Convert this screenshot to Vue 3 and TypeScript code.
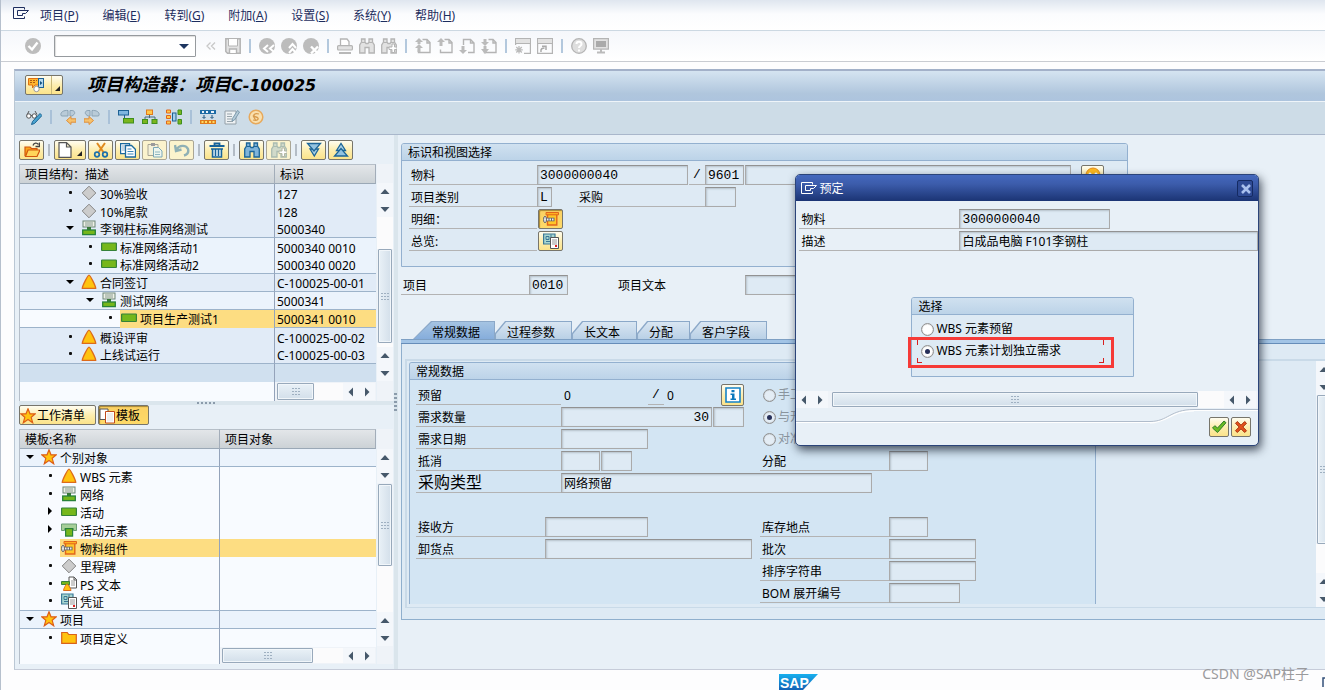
<script setup lang="ts">
import { ref } from 'vue'

interface TreeRow {
  level: number
  mark: 'dot' | 'open' | 'closed'
  icon: string
  text: string
  id: string
  line?: boolean
  selected?: boolean
}

const menus = [
  ['项目', 'P'], ['编辑', 'E'], ['转到', 'G'], ['附加', 'A'],
  ['设置', 'S'], ['系统', 'Y'], ['帮助', 'H'],
]

const G = '#b4b4b4'
const L = '#e2e2e2'
const binoculars = (s: string, f: string) =>
  `<path d="M2.500 1h3.500v3l1 1.500h2L10 4V1h3.500v3L15.300 7v8H10v-5.500H6V15H.700V7l1.800-3z" fill="${f}" stroke="${s}" stroke-width="1.300"/><path d="M3 4.500h3M10 4.500h3" stroke="${s}"/>`
const page = `<path d="M7.500 1.500h4.500l3 3v10H3.500v-3M12 1.500v3.500h3" fill="none" stroke="${G}" stroke-width="1.400"/>`
const disc = `<circle cx="8" cy="8" r="8" fill="#bcbcbc"/>`

const icons: Record<string, string> = {
  exit: `<path d="M11.500 4.500v-2h-11v11h11v-2" fill="none" stroke="currentColor"/><path d="M4.500 5.500h11l-3 3h-3v2h-5z" fill="none" stroke="currentColor"/>`,
  check: `<circle cx="8" cy="8" r="8" fill="#bdbdbd"/><path d="M3.500 8l3.500 3.500 5.500-7" fill="none" stroke="#fff" stroke-width="2.400"/>`,
  chev: `<path d="M7.500 4.500L4 8l3.500 3.500M12 4.500L8.500 8l3.500 3.500" fill="none" stroke="#c8c8c8" stroke-width="1.300"/>`,
  save: `<path d="M.8.8h14.400v14.400H2.500L.8 13.500z" fill="${L}" stroke="${G}" stroke-width="1.500"/><path d="M3.500 1v7h9V1" fill="#fff" stroke="${G}"/><path d="M4.500 15v-4h7v4" fill="#fff" stroke="${G}" stroke-width="1.400"/>`,
  back: disc + `<path d="M9 7L5 10.500 9 14M15 7l-4 3.500 4 3.500" fill="none" stroke="#fff" stroke-width="2"/>`,
  up: disc + `<path d="M8 10l3.500-4L15 10M8 15l3.500-4 3.500 4" fill="none" stroke="#fff" stroke-width="2"/>`,
  cancel: disc + `<path d="M8 8.500l7 7M15 8.500l-7 7" stroke="#fff" stroke-width="2.400"/>`,
  print: `<path d="M3.500 8V1h6.500l2 2.500V8" fill="#fff" stroke="${G}" stroke-width="1.300"/><rect x=".6" y="7.600" width="14.800" height="4.400" rx="1" fill="${L}" stroke="${G}" stroke-width="1.200"/><rect x="2" y="14" width="12" height="2" fill="#b8b8b8"/>`,
  find: binoculars(G, L),
  findNext: binoculars(G, L) + `<path d="M8 9h3V6h2.500v3H16v2.500h-2.500v3H11v-3H8z" fill="#fff" stroke="${G}"/>`,
  pgFirst: page + `<path d="M4 0l4 4H5.500v2H2.500V4H0zM4 6l4 4H5.500v4H2.500v-4H0z" fill="#bbb"/>`,
  pgUp: page + `<path d="M4 0l4 4H5.500v4H2.500V4H0z" fill="#bbb"/>`,
  pgDown: `<path d="M4.500 7V1.500h7l3.500 3.500v9.500H9M11.500 1.500V5H15" fill="none" stroke="${G}" stroke-width="1.400"/><path d="M2.500 8h3v4H8l-4 4-4-4h2.500z" fill="#bbb"/>`,
  pgLast: page + `<path d="M2.500 1h3v3H8L4 8 0 4h2.500zM2.500 8h3v3H8l-4 5-4-5h2.500z" fill="#bbb"/>`,
  session: `<path d="M.6 7V.6h14.800v14.800H9" fill="none" stroke="${G}" stroke-width="1.200"/><path d="M1 1h14v4H1z" fill="${L}"/><path d="M.5 5.500h15" stroke="${G}"/><path d="M4 8v7.500M.3 11.800h7.500M1.300 9l5.500 5.500M6.800 9l-5.500 5.500" stroke="#bbb" stroke-width="1.300"/>`,
  shortcut: `<path d="M.6.6h14.800v14.800H.6z" fill="none" stroke="${G}" stroke-width="1.200"/><path d="M1 1h14v4H1z" fill="${L}"/><path d="M.5 5.500h15" stroke="${G}"/><path d="M4 14c-.5-3 1-4 3.500-4M5 8.300h4V12" fill="none" stroke="#aaa" stroke-width="1.500"/>`,
  help: `<circle cx="8" cy="8" r="7.300" fill="#dedede" stroke="${G}" stroke-width="1.300"/><path d="M5.500 6c0-3 5-3 5 0 0 2-2.500 2-2.500 4M8 11.500v2" fill="none" stroke="#fff" stroke-width="2"/>`,
  monitor: `<rect x=".6" y=".6" width="14.800" height="10.500" fill="${L}" stroke="${G}" stroke-width="1.200"/><rect x="3" y="3" width="10" height="6" fill="#aaa"/><path d="M7 11h2v2.500h3v2H4v-2h3z" fill="#bbb"/>`,
  edit: `<path d="M3 2L1 6M9 2l2 3.500" fill="none" stroke="#555"/><circle cx="2.800" cy="7" r="2.200" fill="#fff" stroke="#555"/><circle cx="8.300" cy="7" r="2.200" fill="#fff" stroke="#555"/><path d="M5 6.500h1" stroke="#555"/><path d="M14 4.500l2 2-7.500 8-3 1 1-3z" fill="#4aa3cf" stroke="#1c6593"/>`,
  moveL: `<path d="M1 6.500C0 3 4 1 8 1.500v5.500H2zM10 1.500h2c2.500 0 3.500 2.500 2 4L12 7h-2z" fill="#b9cbd8" stroke="#8ba3b5"/><path d="M6.500 11.500l4.500-4v2.300h5v3.400h-5v2.300z" fill="#f6c26c" stroke="#dd8f3e"/>`,
  moveR: `<path d="M15 6.500C16 3 12 1 8 1.500v5.500h6zM6 1.500H4C1.500 1.500.500 4 2 5.500L4 7h2z" fill="#b9cbd8" stroke="#8ba3b5"/><path d="M9.500 11.500L5 7.500v2.300H0v3.400h5v2.300z" fill="#f6c26c" stroke="#dd8f3e"/>`,
  gantt: `<rect x=".5" y="1.500" width="10" height="4.500" fill="#7fb6df" stroke="#1d6194"/><path d="M6.500 6v5" stroke="#1d6194"/><rect x="5.500" y="9.500" width="10" height="4.500" fill="#7ab51d" stroke="#3f8f1c"/>`,
  hier: `<path d="M7.500 5v4M3 11V8h10v3" fill="none" stroke="#4a6c7c"/><rect x="4.500" y="1" width="6" height="4.500" fill="#ffc84a" stroke="#e07b1c"/><rect x=".5" y="10.500" width="5" height="4" fill="#7ab51d" stroke="#3f8f1c"/><rect x="10" y="10.500" width="5" height="4" fill="#7ab51d" stroke="#3f8f1c"/>`,
  net: `<g fill="#ffc84a" stroke="#e0661c"><path d="M.5 1h4v3h-4zM.5 6.500h4v3h-4zM.5 12h4v3h-4z"/></g><rect x="6.500" y="4" width="3.500" height="8" fill="#a6d0ec" stroke="#1d6194"/><path d="M12 1h3.500v4.500H12zM12 10.500h3.500V15H12z" fill="#7ab51d" stroke="#3f8f1c"/>`,
  plan: `<path d="M0 1h16v4H0z" fill="#1d6ba5"/><path d="M2 2h2v2H2zM6 2h2v2H6zM11 2h3v2h-3z" fill="#e9f3fb"/><path d="M4 6v3M2.500 8L4 9.500 5.500 8M12 6v3M10.500 8L12 9.500 13.500 8" fill="none" stroke="#1d5580"/><path d="M0 11h16v4H0z" fill="#e07b1c"/><path d="M1.500 12h2v2h-2zM5 12h2v2H5zM9 12h2v2H9zM12.500 12h2v2h-2z" fill="#ffdc62"/>`,
  note: `<path d="M1 2h11v13H1z" fill="#eef2f4" stroke="#94a0a8"/><path d="M3 5h5M3 7.500h5M3 10h5M3 12.500h6" stroke="#98a4ab"/><path d="M13.500 1.500l2 1.500-5 8-2.500 1 .5-2.500z" fill="#b5cbd8" stroke="#7d9bae"/>`,
  coin: `<circle cx="8" cy="8" r="6.800" fill="#fae0ae" stroke="#e7a95c" stroke-width="1.500"/><path d="M11 5C6 3.500 4 7 8 8s2 4.500-3 3M5 6.500l2.500 4.500" fill="none" stroke="#d89a4c" stroke-width="1.300"/>`,
  process: `<path d="M.5 1.500h11v6.500H7l-2.500 3V8h-4z" fill="#ffb52e" stroke="#dd6f12"/><path d="M2 3.500h7M2 5.500h6" stroke="#b05a10" stroke-dasharray="2 1"/><rect x="10.500" y="1.500" width="5" height="9" fill="#b5d9ef" stroke="#1d6194"/><path d="M12 4l2.500 2L12 8z" fill="#12507e"/><circle cx="8.500" cy="12" r="2.700" fill="#fff" stroke="#999"/>`,
  open: `<path d="M1 14V5h5l1.500 1.500H13V8" fill="#f9a51a" stroke="#d2560d" stroke-width="1.200"/><path d="M1.500 14.500L4 8h12l-3 6.500z" fill="#ffd55a" stroke="#d2560d" stroke-width="1.200"/><path d="M9 3.500c1-3 4-3 5.500-1M15.500.5v4h-4" fill="none" stroke="#444" stroke-width="1.300"/>`,
  create: `<path d="M3 .6h7.500L15 5v10.400H3zM10.500.6V5H15" fill="#fff" stroke="#555" stroke-width="1.200"/>`,
  cut: `<path d="M4 1l7 10M12 1L5 11" stroke="#e08a1e" stroke-width="2"/><circle cx="4" cy="12.500" r="2.300" fill="none" stroke="#1c70ab" stroke-width="1.700"/><circle cx="12" cy="12.500" r="2.300" fill="none" stroke="#1c70ab" stroke-width="1.700"/>`,
  copy: `<path d="M.6 1.600h9v10h-9z" fill="#fff" stroke="#1c6a9e" stroke-width="1.200"/><path d="M2 4h3M2 6h3M2 8h3" stroke="#8aaec6"/><path d="M5.500 3.500h6l4 4v7.500h-10z" fill="#fff" stroke="#1c6a9e" stroke-width="1.300"/><path d="M7.500 7h4M7.500 9.500h6M7.500 12h6" stroke="#3b87b8"/>`,
  paste: `<path d="M1 2.500h10v11H1z" fill="#f5f1d8" stroke="#a8a595"/><path d="M4 1h4v3H4z" fill="#9b9b9b"/><path d="M6.500 5.500h5l3.500 3.500v6H6.500z" fill="#eef6ee" stroke="#7ca9b8"/><path d="M8 10h5M8 12.500h5" stroke="#8fb6c0"/>`,
  undo: `<path d="M1 3l1 6 5.500-1.500M2.500 7.500C5 3 12 2.500 14 7c.8 3-.8 5.500-4 6.500" fill="none" stroke="#8fb0b5" stroke-width="2.400"/>`,
  trash: `<path d="M.5 4h15M5.500 4V1.500h5V4" fill="none" stroke="#17639b" stroke-width="1.800"/><path d="M2 7h12M3.500 7h9v8h-9z" fill="#cfe4f0" stroke="#17639b" stroke-width="1.500"/><path d="M6.500 7v7M9.500 7v7" stroke="#17639b" stroke-width="1.300"/>`,
  findB: binoculars('#1c6598', '#7fb4da'),
  findBN: `<g opacity=".5">${binoculars('#5b8696', '#a9c2c9')}</g><path d="M8 9h3V6h2.500v3H16v2.500h-2.500v3H11v-3H8z" fill="#fff" stroke="#b5b9a4"/>`,
  down: `<path d="M4 7h8.500L8.300 14z" fill="#a8cfe4" stroke="#1c6598" stroke-width="1.300"/><path d="M1.500 1.500h13L8 9z" fill="#93c3e0" stroke="#1c6598" stroke-width="1.300"/>`,
  upp: `<path d="M3.500 8.500L8 1.500l4.500 7z" fill="#a8cfe4" stroke="#1c6598" stroke-width="1.300"/><path d="M1.500 14h13L8 6.500z" fill="#93c3e0" stroke="#1c6598" stroke-width="1.300"/>`,
  milestone: `<path d="M8 1.200L14.800 8 8 14.800 1.200 8z" fill="#ccc" stroke="#858585"/>`,
  network: `<rect x="2" y="1" width="12" height="6" fill="#eef1e6" stroke="#6d8577"/><path d="M4 3h8M4 5h8" stroke="#8a9c92"/><path d="M8 7v3.500" stroke="#39793a" stroke-width="4"/><rect x="1.700" y="10" width="12.600" height="4.600" fill="#76b71b" stroke="#28823a" stroke-width="1.300"/>`,
  activity: `<rect x=".6" y="4" width="14.800" height="7.500" rx=".5" fill="#76b71b" stroke="#35823a" stroke-width="1.200"/>`,
  element: `<path d="M.5 2h15v6.500h-3V6.500h-9v2h-3z" fill="#a5cf98" stroke="#6b9d75"/><rect x="4.600" y="6.600" width="7" height="7.500" fill="#76b71b" stroke="#28823a" stroke-width="1.200"/>`,
  wbs: `<path d="M8 1.200c1.200 0 6.700 10.800 6.700 13.200H1.300C1.300 12 6.800 1.200 8 1.200z" fill="#ffc30f" stroke="#dd6a1a" stroke-width="1.300"/>`,
  star: `<path d="M8 .8l2 5h5.300l-4.100 3.500 1.500 5.500L8 11.600l-4.700 3.200 1.500-5.500L.7 5.800H6z" fill="#ffc30f" stroke="#de5f17" stroke-width="1.200"/>`,
  component: `<path d="M4.500 3v11h9.300V3" fill="#ffc627" stroke="#e1661c" stroke-width="1.400"/><path d="M3 1.500h12.500v2.300H3z" fill="#ffb020" stroke="#e1661c"/><ellipse cx="2" cy="8.500" rx="1.500" ry="3.200" fill="#e5e5e5" stroke="#666"/><path d="M3.500 8.500h8" stroke="#666" stroke-width="3.600"/><path d="M4 8.500h7" stroke="#eee" stroke-width="1.800" stroke-dasharray="1.500 1"/>`,
  pstext: `<path d="M8 1h5l2.500 2.500V12H8zM13 1v3h3" fill="#fff" stroke="#555"/><path d="M10 5h4M10 7h4M10 9h4" stroke="#999"/><path d="M.5 5.500h8v3h-8z" fill="#76b71b" stroke="#39823a"/><path d="M6 8c1 0 4 5 4 6.500H2.500C2.500 13 5 8 6 8z" fill="#ffc30f" stroke="#dd6a1a"/>`,
  doc: `<path d="M.6 1h11.400v10H.6z" fill="#a9d6d0" stroke="#3b7897" stroke-width="1.200"/><path d="M3 3.500h3v3H3zM8 1.500V6h3M3 8.500h4" fill="none" stroke="#3b7897"/><path d="M7.500 4.500h8v11h-8z" fill="#fff" stroke="#555"/><path d="M9 7h5M9 9h5M9 11h5" stroke="#999"/><path d="M12 12h2v2h-2z" fill="#e02020"/>`,
  folder: `<path d="M.7 13.300V2.500h5.500l1.500 2h7.600v8.800z" fill="#ffc30f" stroke="#d9621b" stroke-width="1.200"/>`,
  template: `<path d="M1 1h8v10.500H1z" fill="#fff" stroke="#555"/><path d="M6.500 3.500h9v11.500h-9z" fill="#fff" stroke="#c04a1a"/><path d="M8 5h6v8.500H8z" fill="#eee"/>`,
  info: `<path d="M1 1h14v14H1z" fill="#fff" stroke="#1583c6" stroke-width="1.600"/><path d="M6.500 3h3v2.200h-3zM5.500 6.500h4v5H11V13H5.500v-1.500H7V8H5.500z" fill="#0a78bd"/>`,
  people: `<circle cx="8" cy="8" r="7" fill="#ffb91e" stroke="#e38b1d"/><circle cx="5" cy="7" r="1.500" fill="#fff"/><circle cx="11" cy="7" r="1.500" fill="#fff"/>`,
  ok: `<path d="M1.500 9l2.300-2.300 2.700 2.300L13 2l2 1.700L6.500 13.500z" fill="#6cbb23" stroke="#2d7e2a"/>`,
  no: `<path d="M4.300 2.500L8 6.200l3.700-3.700L13.500 4.300 9.800 8l3.700 3.700-1.800 1.800L8 9.800l-3.700 3.700-1.800-1.800L6.200 8 2.500 4.300z" fill="#e4521a" stroke="#a6310e"/>`,
  cross: `<path d="M4 4l8 8M12 4l-8 8" stroke="#a9c0ee" stroke-width="2.600"/>`,
  aUp: `<path d="M8 5L12.500 10h-9z" fill="#46586a"/>`,
  aDown: `<path d="M8 11L3.500 6h9z" fill="#46586a"/>`,
  aLeft: `<path d="M5.500 8L10 3.500v9z" fill="#46586a"/>`,
  aRight: `<path d="M10.500 8L6 3.500v9z" fill="#46586a"/>`,
  corner: `<path d="M2 13V4h9" fill="none" stroke="#33507a" stroke-width="1.500"/><path d="M4.500 13V7.500h5" fill="none" stroke="#33507a"/>`,
}

const sysBar = ['chev', 'save', '|', 'back', 'up', 'cancel', '|', 'print', 'find', 'findNext', '|', 'pgFirst', 'pgUp', 'pgDown', 'pgLast', '|', 'session', 'shortcut', '|', 'help', 'monitor']
const appBar = ['edit', '|', 'moveL', 'moveR', '|', 'gantt', 'hier', 'net', '|', 'plan', 'note', 'coin']
const treeBar = ['open', '|', 'create', 'cut', 'copy', 'paste', 'undo', '|', 'trash', '|', 'findB', 'findBN', '|', 'down', 'upp']

const structure: TreeRow[] = [
  { level: 2, mark: 'dot', icon: 'milestone', text: '30%验收', id: '127' },
  { level: 2, mark: 'dot', icon: 'milestone', text: '10%尾款', id: '128' },
  { level: 2, mark: 'open', icon: 'network', text: '李钢柱标准网络测试', id: '5000340', line: true },
  { level: 3, mark: 'dot', icon: 'activity', text: '标准网络活动1', id: '5000340 0010' },
  { level: 3, mark: 'dot', icon: 'activity', text: '标准网络活动2', id: '5000340 0020', line: true },
  { level: 2, mark: 'open', icon: 'wbs', text: '合同签订', id: 'C-100025-00-01', line: true },
  { level: 3, mark: 'open', icon: 'network', text: '测试网络', id: '5000341', line: true },
  { level: 4, mark: 'dot', icon: 'activity', text: '项目生产测试1', id: '5000341 0010', line: true, selected: true },
  { level: 2, mark: 'dot', icon: 'wbs', text: '概设评审', id: 'C-100025-00-02' },
  { level: 2, mark: 'dot', icon: 'wbs', text: '上线试运行', id: 'C-100025-00-03', line: true },
]

const templates: TreeRow[] = [
  { level: 0, mark: 'open', icon: 'star', text: '个别对象', id: '', line: true },
  { level: 1, mark: 'dot', icon: 'wbs', text: 'WBS 元素', id: '' },
  { level: 1, mark: 'dot', icon: 'network', text: '网络', id: '' },
  { level: 1, mark: 'closed', icon: 'activity', text: '活动', id: '' },
  { level: 1, mark: 'closed', icon: 'element', text: '活动元素', id: '' },
  { level: 1, mark: 'dot', icon: 'component', text: '物料组件', id: '', selected: true },
  { level: 1, mark: 'dot', icon: 'milestone', text: '里程碑', id: '' },
  { level: 1, mark: 'dot', icon: 'pstext', text: 'PS 文本', id: '' },
  { level: 1, mark: 'dot', icon: 'doc', text: '凭证', id: '', line: true },
  { level: 0, mark: 'open', icon: 'star', text: '项目', id: '', line: true },
  { level: 1, mark: 'dot', icon: 'folder', text: '项目定义', id: '' },
]

const trees = [
  { key: 'structure', heads: ['项目结构：描述', '标识'], rows: structure },
  { key: 'template', heads: ['模板:名称', '项目对象'], rows: templates },
]

const tabs = ['常规数据', '过程参数', '长文本', '分配', '客户字段']
const activeTab = ref('常规数据')
const choice = ref('indep')
const mode = ref('b')
</script>

<template>
  <div class="page">
    <nav class="menubar">
      <svg class="ic exit" viewBox="0 0 16 16" v-html="icons.exit" />
      <a v-for="m in menus" :key="m[1]" href="#">{{ m[0] }}(<u>{{ m[1] }}</u>)</a>
    </nav>

    <div class="sysbar">
      <button class="flat" aria-label="确认"><svg class="ic" viewBox="0 0 16 16" v-html="icons.check" /></button>
      <div class="combo">
        <input aria-label="命令" />
        <span class="combo-arrow"></span>
      </div>
      <template v-for="(n, i) in sysBar" :key="i">
        <span v-if="n === '|'" class="sep"></span>
        <button v-else class="flat" :aria-label="n"><svg class="ic" viewBox="0 0 16 16" v-html="icons[n]" /></button>
      </template>
    </div>

    <div class="workspace">
      <header class="titlebar">
        <button class="ybtn process" aria-label="对象服务">
          <svg class="ic" viewBox="0 0 16 16" v-html="icons.process" />
          <span class="split"></span>
        </button>
        <h1>项目构造器：项目<span class="code">C-100025</span></h1>
      </header>
      <div class="appbar">
        <template v-for="(n, i) in appBar" :key="i">
          <span v-if="n === '|'" class="sep"></span>
          <button v-else class="flat" :aria-label="n"><svg class="ic" viewBox="0 0 16 16" v-html="icons[n]" /></button>
        </template>
      </div>

      <div class="body">
        <aside class="left">
          <div class="treebar">
            <template v-for="(n, i) in treeBar" :key="i">
              <span v-if="n === '|'" class="tsep"></span>
              <button v-else class="ybtn" :class="{ drop: n === 'create', dim: ['paste', 'undo', 'findBN'].includes(n) }" :aria-label="n">
                <svg class="ic" viewBox="0 0 16 16" v-html="icons[n]" />
              </button>
            </template>
          </div>

          <template v-for="t in trees" :key="t.key">
            <div v-if="t.key === 'template'" class="hsplit"><span class="grip"></span></div>
            <div v-if="t.key === 'template'" class="modes">
              <button class="ybtn wide"><svg class="ic" viewBox="0 0 16 16" v-html="icons.star" />工作清单</button>
              <button class="ybtn wide on"><svg class="ic" viewBox="0 0 16 16" v-html="icons.template" />模板</button>
            </div>
            <div class="treebox" :class="t.key">
              <div class="treemain">
                <table>
                  <thead>
                    <tr><th class="c1">{{ t.heads[0] }}</th><th>{{ t.heads[1] }}</th></tr>
                  </thead>
                  <tbody>
                    <tr v-for="r in t.rows" :key="r.text" :class="['lv' + r.level, { line: r.line, selected: r.selected }]">
                      <td class="c1">
                        <div class="node">
                          <span class="mark" :class="r.mark"></span>
                          <span class="item"><svg class="ic" viewBox="0 0 16 16" v-html="icons[r.icon]" />{{ r.text }}</span>
                        </div>
                      </td>
                      <td class="c2">{{ r.id }}</td>
                    </tr>
                    <tr v-if="t.key === 'structure'" class="empty"><td class="c1"></td><td></td></tr>
                  </tbody>
                </table>
                <div class="hrow">
                  <div class="hfill"></div>
                  <div class="sb h">
                    <div class="thumb"><i class="dots"></i></div>
                    <div class="track"></div>
                    <button class="sbb" aria-label="左"><svg class="ic" viewBox="0 0 16 16" v-html="icons.aLeft" /></button>
                    <button class="sbb" aria-label="右"><svg class="ic" viewBox="0 0 16 16" v-html="icons.aRight" /></button>
                  </div>
                </div>
              </div>
              <div class="sb v">
                <button class="sbb" aria-label="上"><svg class="ic" viewBox="0 0 16 16" v-html="icons.aUp" /></button>
                <button class="sbb" aria-label="下"><svg class="ic" viewBox="0 0 16 16" v-html="icons.aDown" /></button>
                <div class="track before"></div>
                <div class="thumb"><i class="dots"></i></div>
                <div class="track"></div>
                <button class="sbb" aria-label="上"><svg class="ic" viewBox="0 0 16 16" v-html="icons.aUp" /></button>
                <button class="sbb" aria-label="下"><svg class="ic" viewBox="0 0 16 16" v-html="icons.aDown" /></button>
              </div>
            </div>
          </template>
        </aside>

        <div class="vsplit"><span class="vgrip"></span></div>

        <main class="right">
          <section class="group ident">
            <h2>标识和视图选择</h2>
            <div class="rows">
              <div class="row">
                <label class="w128" for="mat">物料</label>
                <input id="mat" class="f151" value="3000000040" readonly />
                <span class="slash">/</span>
                <input class="f39" aria-label="工厂" value="9601" readonly />
                <input class="f326" aria-label="物料描述" readonly />
                <button class="ybtn ppl" aria-label="人员"><svg class="ic" viewBox="0 0 16 16" v-html="icons.people" /></button>
              </div>
              <div class="row">
                <label class="w128" for="cat">项目类别</label>
                <input id="cat" class="f15" value="L" readonly />
                <label class="w128 buy" for="buy">采购</label>
                <input id="buy" class="f31" readonly />
              </div>
              <div class="row">
                <span class="lab w128">明细：</span>
                <button class="ybtn on" aria-label="明细"><svg class="ic" viewBox="0 0 16 16" v-html="icons.component" /></button>
              </div>
              <div class="row">
                <span class="lab w128">总览:</span>
                <button class="ybtn" aria-label="总览"><svg class="ic" viewBox="0 0 16 16" v-html="icons.doc" /></button>
              </div>
            </div>
          </section>

          <div class="row itemrow">
            <label class="w128" for="item">项目</label>
            <input id="item" class="f39" value="0010" readonly />
            <label class="plain" for="itemtext">项目文本</label>
            <input id="itemtext" class="f326" readonly />
          </div>

          <div class="tabs" role="tablist">
            <button v-for="t in tabs" :key="t" class="tab" role="tab" :class="{ active: t === activeTab }" :aria-selected="t === activeTab" @click="activeTab = t">
              <span>{{ t }}</span>
            </button>
          </div>
          <div class="tabpanel">
            <div class="inner">
              <section class="group general">
                <h2>常规数据</h2>
                <div class="rows">
                  <div class="row">
                    <div class="lft">
                      <span class="lab w145">预留</span><span class="num n87">0</span><span class="slash">/</span><span class="num n56">0</span>
                      <button class="ybtn info" aria-label="信息"><svg class="ic" viewBox="0 0 16 16" v-html="icons.info" /></button>
                    </div>
                    <label class="rad off"><input v-model="mode" type="radio" value="a" disabled />手工</label>
                  </div>
                  <div class="row">
                    <div class="lft">
                      <label class="w145" for="qty">需求数量</label><input id="qty" class="f151 num-r" value="30" readonly /><input class="f31 g1" aria-label="单位" readonly />
                    </div>
                    <label class="rad off"><input v-model="mode" type="radio" value="b" disabled />与开始</label>
                  </div>
                  <div class="row">
                    <div class="lft"><label class="w145" for="date">需求日期</label><input id="date" class="f87" readonly /></div>
                    <label class="rad off"><input v-model="mode" type="radio" value="c" disabled />对准</label>
                  </div>
                  <div class="row">
                    <div class="lft"><label class="w145" for="off">抵消</label><input id="off" class="f39" readonly /><input class="f31 g1" aria-label="抵消单位" readonly /></div>
                    <label class="w129" for="dist">分配</label><input id="dist" class="f39" readonly />
                  </div>
                  <div class="row">
                    <label class="w145 big" for="ptype">采购类型</label><input id="ptype" class="f311 cjk" value="网络预留" readonly />
                  </div>
                  <div class="row"></div>
                  <div class="row">
                    <div class="lft"><label class="w129" for="recv">接收方</label><input id="recv" class="f103" readonly /></div>
                    <label class="w129" for="loc">库存地点</label><input id="loc" class="f39" readonly />
                  </div>
                  <div class="row">
                    <div class="lft"><label class="w129" for="unl">卸货点</label><input id="unl" class="f207" readonly /></div>
                    <label class="w129" for="batch">批次</label><input id="batch" class="f87" readonly />
                  </div>
                  <div class="row">
                    <div class="lft"></div>
                    <label class="w129" for="sort">排序字符串</label><input id="sort" class="f87" readonly />
                  </div>
                  <div class="row">
                    <div class="lft"></div>
                    <label class="w129" for="bom">BOM 展开编号</label><input id="bom" class="f71" readonly />
                  </div>
                </div>
              </section>
              <div class="sb v panelsb">
                <button class="sbb" aria-label="上"><svg class="ic" viewBox="0 0 16 16" v-html="icons.aUp" /></button>
                <button class="sbb" aria-label="下"><svg class="ic" viewBox="0 0 16 16" v-html="icons.aDown" /></button>
                <div class="thumb"><i class="dots"></i></div>
                <div class="track"></div>
                <button class="sbb" aria-label="上"><svg class="ic" viewBox="0 0 16 16" v-html="icons.aUp" /></button>
                <button class="sbb" aria-label="下"><svg class="ic" viewBox="0 0 16 16" v-html="icons.aDown" /></button>
              </div>
            </div>
          </div>
        </main>
      </div>
    </div>

    <footer class="status">
      <svg class="sap" viewBox="0 0 40 16">
        <defs><linearGradient id="sapg" x1="0" y1="0" x2="0" y2="1"><stop offset="0" stop-color="#18b0ee" /><stop offset="1" stop-color="#1261b5" /></linearGradient></defs>
        <path d="M0 0h39L24 16H0z" fill="url(#sapg)" />
        <text x="1" y="14" font-family="Liberation Sans, sans-serif" font-size="14" font-weight="700" fill="#fff">SAP</text>
      </svg>
      <svg class="ic more" viewBox="0 0 16 16" v-html="icons.corner" />
    </footer>

    <div class="dialog" role="dialog" aria-label="预定">
      <div class="dtitle">
        <svg class="ic" viewBox="0 0 16 16" v-html="icons.exit" />
        <span>预定</span>
        <button class="close" aria-label="关闭"><svg class="ic" viewBox="0 0 16 16" v-html="icons.cross" /></button>
      </div>
      <div class="drows">
        <div class="row"><label class="w160" for="dmat">物料</label><input id="dmat" class="f151" value="3000000040" readonly /></div>
        <div class="row"><label class="w160" for="ddesc">描述</label><input id="ddesc" class="grow cjk" value="白成品电脑 F101李钢柱" readonly /></div>
      </div>
      <section class="group choose">
        <h2>选择</h2>
        <div class="rows">
          <div class="row"><label class="rad"><input v-model="choice" type="radio" value="res" />WBS 元素预留</label></div>
          <div class="row"><label class="rad"><input v-model="choice" type="radio" value="indep" />WBS 元素计划独立需求</label></div>
        </div>
      </section>
      <div class="sb h dsb">
        <button class="sbb" aria-label="左"><svg class="ic" viewBox="0 0 16 16" v-html="icons.aLeft" /></button>
        <button class="sbb" aria-label="右"><svg class="ic" viewBox="0 0 16 16" v-html="icons.aRight" /></button>
        <div class="thumb"><i class="dots"></i></div>
        <div class="track"></div>
        <button class="sbb" aria-label="左"><svg class="ic" viewBox="0 0 16 16" v-html="icons.aLeft" /></button>
        <button class="sbb" aria-label="右"><svg class="ic" viewBox="0 0 16 16" v-html="icons.aRight" /></button>
      </div>
      <div class="dfoot">
        <div class="curve">
          <span class="cline low"></span>
          <svg class="cbend" viewBox="0 0 44 16" fill="none"><path d="M0 14.500C18 14.500 20 2.500 44 2.500" stroke="#fff" stroke-width="2" /><path d="M0 13.500C18 13.500 20 1.500 44 1.500" stroke="#b0bccb" /></svg>
          <span class="cline high"></span>
        </div>
        <div class="dbtns">
          <button class="ybtn sq" aria-label="确定"><svg class="ic" viewBox="0 0 16 16" v-html="icons.ok" /></button>
          <button class="ybtn sq" aria-label="取消"><svg class="ic" viewBox="0 0 16 16" v-html="icons.no" /></button>
        </div>
      </div>
      <div class="redbox"><i class="ca"></i><i class="cb"></i><i class="cc"></i><i class="cd"></i></div>
    </div>

    <div class="watermark">CSDN @SAP柱子</div>
  </div>
</template>

<style>
html, body { margin: 0; overflow: hidden; }
</style>

<style scoped>
* { box-sizing: border-box; }
.page {
  position: relative; height: 100vh; min-height: 690px; overflow: hidden; display: flex; flex-direction: column;
  background: #fdfdfe; border-left: 1px solid #b6c0cd; color: #000;
  font: 12px/16px "Noto Sans", "Noto Sans CJK SC", sans-serif;
}
button, input { font: inherit; color: inherit; margin: 0; padding: 0; border: 0; border-radius: 0; min-width: 0; }
button { background: none; flex: none; }
.ic { width: 16px; height: 16px; flex: none; display: block; }
.flat { width: 16px; height: 16px; }

.menubar { height: 31px; flex: none; display: flex; gap: 24px; align-items: center; padding: 2px 0 0 12px; border-bottom: 1px solid #ccd8e2; background: linear-gradient(#dfe6ef, #fbfcfe 14px, #fff); color: #1d2d5e; }
.menubar a { color: inherit; text-decoration: none; }
.exit { color: #1d2d5e; margin: 0 -13px 6px 0; }
.sysbar { height: 31px; flex: none; display: flex; align-items: center; gap: 6px; padding-left: 24px; border-bottom: 1px solid #c9ccd2; background: linear-gradient(#f5f7fb, #fff); }
.combo { width: 142px; height: 22px; margin: 0 1px 0 7px; border: 1px solid #969a9e; border-radius: 1px; background: #fff; display: flex; align-items: center; padding-right: 6px; box-shadow: inset 1px 1px 1px #ddd; }
.combo input { flex: 1; background: transparent; outline: 0; }
.combo-arrow { border: 5px solid transparent; border-top-color: #1d3560; border-bottom: 0; }
.sep { width: 2px; height: 14px; margin: 0 2px; background: #b3c8dd; flex: none; }

.workspace { flex: 1; min-height: 0; margin: 7px 0 0 13px; display: flex; flex-direction: column; border-left: 1px solid #bac7d4; border-top: 2px solid #a3b1c9; border-bottom: 1px solid #c6ccd9; }
.titlebar { height: 31px; flex: none; display: flex; align-items: center; padding: 0 0 2px 10px; gap: 24px; background: linear-gradient(#d5e4f1, #b0c6dd 75%, #adc4de); border-bottom: 1px solid #eef4f9; }
.titlebar h1 { margin: 0; font-size: 18px; line-height: 24px; font-weight: 700; font-style: italic; white-space: nowrap; }
.titlebar .code { font-family: "DejaVu Sans", sans-serif; font-size: 16px; }
.appbar { height: 33px; flex: none; display: flex; align-items: center; gap: 8px; padding: 0 0 3px 11px; background: #cddce7; border-bottom: 1px solid #a9b7cb; }
.appbar .sep { margin: 0; background: #a9c1d8; }

.ybtn { width: 25px; height: 20px; display: flex; align-items: center; justify-content: center; border: 1px solid #77756b; border-radius: 2px; background: linear-gradient(#fffdf0, #fdeeb0 50%, #fbe38a); }
.ybtn.on { background: linear-gradient(#fbd163, #fdd968); box-shadow: inset 1px 1px 1px #a88733; }
.ybtn.dim { border-color: #aaa695; background: #fbf3cd; }
.ybtn.drop { width: 32px; justify-content: flex-start; padding-left: 1px; position: relative; }
.ybtn.drop::after, .split::after { content: ""; position: absolute; right: 3px; bottom: 3px; border-left: 5px solid transparent; border-bottom: 5px solid #222; }
.ybtn.process { width: 38px; height: 20px; justify-content: flex-start; padding-left: 2px; position: relative; }
.split { margin-left: 7px; height: 18px; border-left: 1px solid #c9b978; }
.split::after { right: 2px; }
.ybtn.wide { width: auto; gap: 1px; padding: 1px 10px 0 0; }
.ybtn.wide.on { padding-right: 8px; gap: 1px; }
.ybtn.sq { width: 20px; }

.body { flex: 1; min-height: 0; display: flex; background: #e8f0f7; }
.left { width: 379px; flex: none; padding: 5px 0 0 4px; }
.treebar { display: flex; gap: 2px; height: 20px; margin-bottom: 4px; align-items: center; }
.tsep { width: 2px; height: 12px; margin: 0 2px; background: #b3bcc6; flex: none; }
.hsplit { height: 4px; display: flex; justify-content: center; align-items: center; background: #dbe6ed; }
.grip { width: 19px; height: 2px; background: repeating-linear-gradient(90deg, #8b9bab 0 2px, transparent 2px 4px); }
.vsplit { width: 4px; flex: none; background: #dae5ec; display: flex; align-items: center; }
.vgrip { width: 3px; height: 19px; background: repeating-linear-gradient(#8b9bab 0 2px, transparent 2px 4px); }
.modes { display: flex; gap: 2px; height: 20px; margin-bottom: 4px; }

.treebox { display: flex; gap: 1px; }
.treemain { width: 357px; }
table { width: 100%; table-layout: fixed; border-collapse: separate; border-spacing: 0; border-left: 1px solid #b5bec9; }
th { height: 20px; padding: 2px 0 0 5px; text-align: left; font-weight: 400; line-height: 16px; background: linear-gradient(#e3e6e9, #ccd2d6); border-top: 1px solid #b6bfc8; border-bottom: 1px solid #9aa8b6; border-right: 1px solid #a3adb9; }
td { height: 18px; padding: 0; line-height: 17px; }
.structure .c1 { width: 255px; }
.template .c1 { width: 200px; }
td.c1 { border-right: 1px solid #94a3ba; }
td.c2 { padding: 2px 0 0 2px; line-height: 15px; white-space: nowrap; }
.structure tr { background: #e1ebf7; }
.structure tr.lv3 { background: #ebf3fc; }
.structure tr.lv4 { background: #f8fbff; }
.structure tr.empty { background: #d0e0ef; }
.template tr { background: #f8fbff; }
.template tr.lv0 { background: #ebf3fc; }
tr.line td { border-bottom: 1px solid #9db3ca; }
tr.selected .item, tr.selected td.c2 { background: #fddd82; }
.structure .c2, .template .c2 { width: auto; }
.node { display: flex; height: 17px; align-items: center; }
.lv1 .node { padding-left: 20px; }
.lv2 .node { padding-left: 40px; }
.lv3 .node { padding-left: 60px; }
.lv4 .node { padding-left: 80px; }
.mark { width: 20px; height: 15px; margin-bottom: 2px; flex: none; display: flex; align-items: center; justify-content: center; }
.mark::before { content: ""; }
.mark.dot::before { width: 3px; height: 3px; border-radius: 1px; background: #111; }
.mark.open::before { border: 4px solid transparent; border-top: 4px solid #000; border-bottom: 0; }
.mark.closed::before { border: 4px solid transparent; border-left: 4px solid #000; border-right: 0; }
.item { flex: 1; height: 18px; display: flex; align-items: center; gap: 3px; white-space: nowrap; padding: 2px 0 0 1px; }
.item .ic { margin-bottom: 3px; }

.sb { display: flex; background: #eff3f8; }
.sb.v { width: 16px; flex-direction: column; }
.sb.h { align-items: stretch; }
.sbb { width: 16px; height: 17px; background: #f4f7fb; }
.track { background: #fbfbfc; flex: 1; }
.thumb { border: 1px solid #98a9bb; border-radius: 1px; background: linear-gradient(90deg, #e9f1f7, #d3dfea); display: flex; align-items: center; justify-content: center; box-shadow: inset 0 0 0 1px #f1f6fa; }
.sb.h .thumb { background: linear-gradient(#e9f1f7, #d3dfea); }
.sb.v .thumb { width: 14px; margin-left: 1px; }
.dots { width: 8px; height: 7px; background: repeating-linear-gradient(90deg, #9fb0c1 0 2px, transparent 2px 3px); -webkit-mask: repeating-linear-gradient(#000 0 1px, transparent 1px 3px); mask: repeating-linear-gradient(#000 0 1px, transparent 1px 3px); }
.hrow { display: flex; height: 19px; background: #f8fbff; border-left: 1px solid #b5bec9; }
.template .hrow { height: 17px; }
.hfill { width: 255px; border-right: 1px solid #94a3ba; flex: none; }
.template .hfill { width: 200px; }
.hrow .sb { flex: 1; padding: 1px 1px 1px 2px; }
.hrow .sbb { height: auto; display: flex; align-items: center; }
.structure .hrow .thumb { width: 37px; }
.template .hrow .thumb { width: 91px; }
.structure .sb.v { padding: 19px 0 20px; }
.structure .sb.v .before { flex: none; height: 32px; }
.structure .sb.v .thumb { height: 94px; }
.template .sb.v { padding: 20px 0 18px; }
.template .sb.v .before { display: none; }
.template .sb.v .thumb { height: 82px; margin-top: 1px; }

.right { flex: 1; min-width: 0; padding: 8px 0 0 3px; }
.group { border: 1px solid #93b0cf; border-radius: 3px 3px 0 0; background: #deeaf4; }
.group h2 { margin: 0; height: 17px; padding-left: 6px; font-size: 12px; line-height: 18px; font-weight: 400; background: linear-gradient(#d0e1f0, #bcd3e8); border-bottom: 1px solid #93b0cf; border-radius: 2px 2px 0 0; }
.ident { width: 727px; height: 124px; }
.ident .rows { padding: 4px 0 0 7px; }
.row { display: flex; height: 20px; margin-bottom: 2px; }
.row > label, .lab, .lft > label { flex: none; height: 20px; padding-left: 2px; line-height: 22px; border-bottom: 1px solid #b3b3b3; white-space: nowrap; }
.row > .rad { border: 0; padding: 0; }
.row input:not([type]) { flex: none; height: 20px; padding: 0 2px; border: 1px solid #aaa; border-top-color: #929292; background: #deeaf4; outline: 0; box-shadow: inset 1px 1px 2px #b6c1ca; font: 13px/18px "Liberation Mono", "Noto Sans CJK SC", monospace; }
.row input.cjk { font: 12px/18px "Noto Sans", "Noto Sans CJK SC", sans-serif; }
.w128 { width: 128px; } .w129 { width: 129px; } .w145 { width: 145px; } .w160 { width: 160px; }
.f15 { width: 15px; } .f31 { width: 31px; } .f39 { width: 39px; } .f71 { width: 71px; } .f87 { width: 87px; }
.f103 { width: 103px; } .f151 { width: 151px; } .f207 { width: 207px; } .f311 { width: 311px; } .f326 { width: 326px; margin-left: 1px; }
.grow { flex: 1 !important; }
.g1 { margin-left: 1px; }
.slash { width: 16px; margin-left: 1px; text-align: center; font: 13px/19px "Liberation Mono", monospace; border-bottom: 1px solid #b3b3b3; flex: none; }
.row .buy { margin-left: 25px; }
.row > .ybtn { margin-left: 1px; }
.row > .ppl { width: 23px; margin-left: 10px; }
.itemrow { margin: 8px 0 0; }
.itemrow > .plain { width: 176px; border: 0; padding-left: 50px; }
.tabs { display: flex; margin: 26px 0 0 12px; height: 18px; }
.tab { height: 18px; background: #8ba8c8; clip-path: polygon(0 12px, 10px 0, 100% 0, 100% 100%, 0 100%); padding: 1px 1px 0; }
.tab span { display: block; height: 17px; line-height: 21px; padding: 0 16px 0 11px; background: linear-gradient(#d9e6f2, #b9d0e6); clip-path: polygon(0 12px, 10px 0, 100% 0, 100% 100%, 0 100%); }
.tab.active, .tab.active span { clip-path: polygon(0 100%, 18px 0, 100% 0, 100% 100%); }
.tab.active span { padding: 0 14px 0 18px; background: linear-gradient(#a5c4e3, #86addb); }
.tabpanel { margin-right: -8px; height: 281px; border: 1px solid #8fafcd; border-top: 0; background: #deeaf4; padding: 20px 0 0 3px; position: relative; }
.tabpanel::before { content: ""; position: absolute; inset: 0 0 auto -1px; height: 3px; background: #a2c4e6; border-top: 1px solid #7ea0c4; border-bottom: 1px solid #668db9; }
.inner { height: 249px; border: 2px solid #c9dae8; border-right: 0; border-bottom-width: 1px; display: flex; padding: 1px 0 2px 2px; }
.general { width: 687px; height: 242px; background: #d3e5f3; border-bottom: 0; }
.general .rows { padding: 5px 0 0 6px; }
.lft { width: 344px; flex: none; display: flex; }
.num { flex: none; padding-left: 3px; line-height: 21px; }
.n87 { width: 86px; } .n56 { width: 57px; }
.ybtn.info { width: 23px; height: 22px; margin-top: -1px; }
.row input.num-r { text-align: right; }
.row > .big { font-size: 16px; line-height: 18px; }
.rad { display: flex; align-items: center; gap: 2px; white-space: nowrap; }
.rad.off { color: #8a949d; padding-left: 3px !important; }
.rad input { appearance: none; width: 13px; height: 13px; border: 1px solid #909090; border-radius: 50%; background: #fff; display: grid; place-items: center; flex: none; box-shadow: inset 0 0 1px #888; }
.rad.off input { background: #e4edf5; }
.rad input:checked::before { content: ""; width: 5px; height: 5px; border-radius: 50%; background: #27305a; }
.panelsb { margin: -1px 0 -2px auto; }
.panelsb .thumb { height: 149px; }

.status { height: 20px; flex: none; display: flex; align-items: flex-end; background: #fdfdfe; }
.sap { width: 40px; height: 16px; margin: 0 auto 0 778px; }
.more { margin-right: -12px; }

.dialog { position: absolute; left: 60%; top: 174px; width: 464px; height: 272px; border: 1px solid #2b4479; border-radius: 5px; background: #e8f0f7; box-shadow: 2px 4px 10px rgba(20, 30, 45, .75); display: flex; flex-direction: column; }
.dtitle { height: 26px; flex: none; display: flex; align-items: center; gap: 2px; padding: 0 5px; color: #fff; border-radius: 4px 4px 0 0; background: linear-gradient(#4468bd, #3c5cab 35%, #1b3474); }
.dtitle span { flex: 1; padding-top: 2px; }
.close { width: 16px; height: 17px; border: 1px solid #142a62; background: #2e4a94; border-radius: 2px; display: grid; place-items: center; }
.drows { padding: 8px 0 0 3px; }
.choose { width: 223px; height: 80px; flex: none; margin: 44px 0 0 115px; }
.choose .rows { padding: 4px 0 0 9px; }
.dsb { height: 17px; flex: none; margin-top: 14px; padding-right: 2px; }
.dsb .thumb { flex: 1; margin: 1px 0 1px 4px; }
.dsb .track { flex: none; width: 26px; }
.dfoot { flex: 1; }
.curve { display: flex; height: 16px; }
.cline { border-top: 1px solid #b0bccb; box-shadow: 0 1px #fff; height: 1px; }
.cline.low { flex: 1; margin-top: 13px; }
.cline.high { width: 64px; margin-top: 1px; }
.cbend { width: 44px; height: 16px; }
.dbtns { display: flex; justify-content: flex-end; gap: 2px; margin-top: -7px; padding-right: 7px; position: relative; }
.redbox { position: absolute; left: 112px; top: 162px; width: 206px; height: 31px; border: 3px solid #f63a37; }
.redbox i { position: absolute; width: 5px; height: 5px; border: 0 solid #d81f1f; }
.ca { left: 6px; top: 0; border-left-width: 1px !important; }
.cb { right: 7px; top: 0; border-right-width: 1px !important; }
.cc { left: 6px; bottom: 2px; border-width: 0 0 1px 1px !important; }
.cd { right: 7px; bottom: 2px; border-width: 0 1px 1px 0 !important; }
.watermark { position: absolute; right: 16px; bottom: 6px; font: 14px/20px "Noto Sans", "Noto Sans CJK SC", sans-serif; color: #9a9a9c; }
</style>
